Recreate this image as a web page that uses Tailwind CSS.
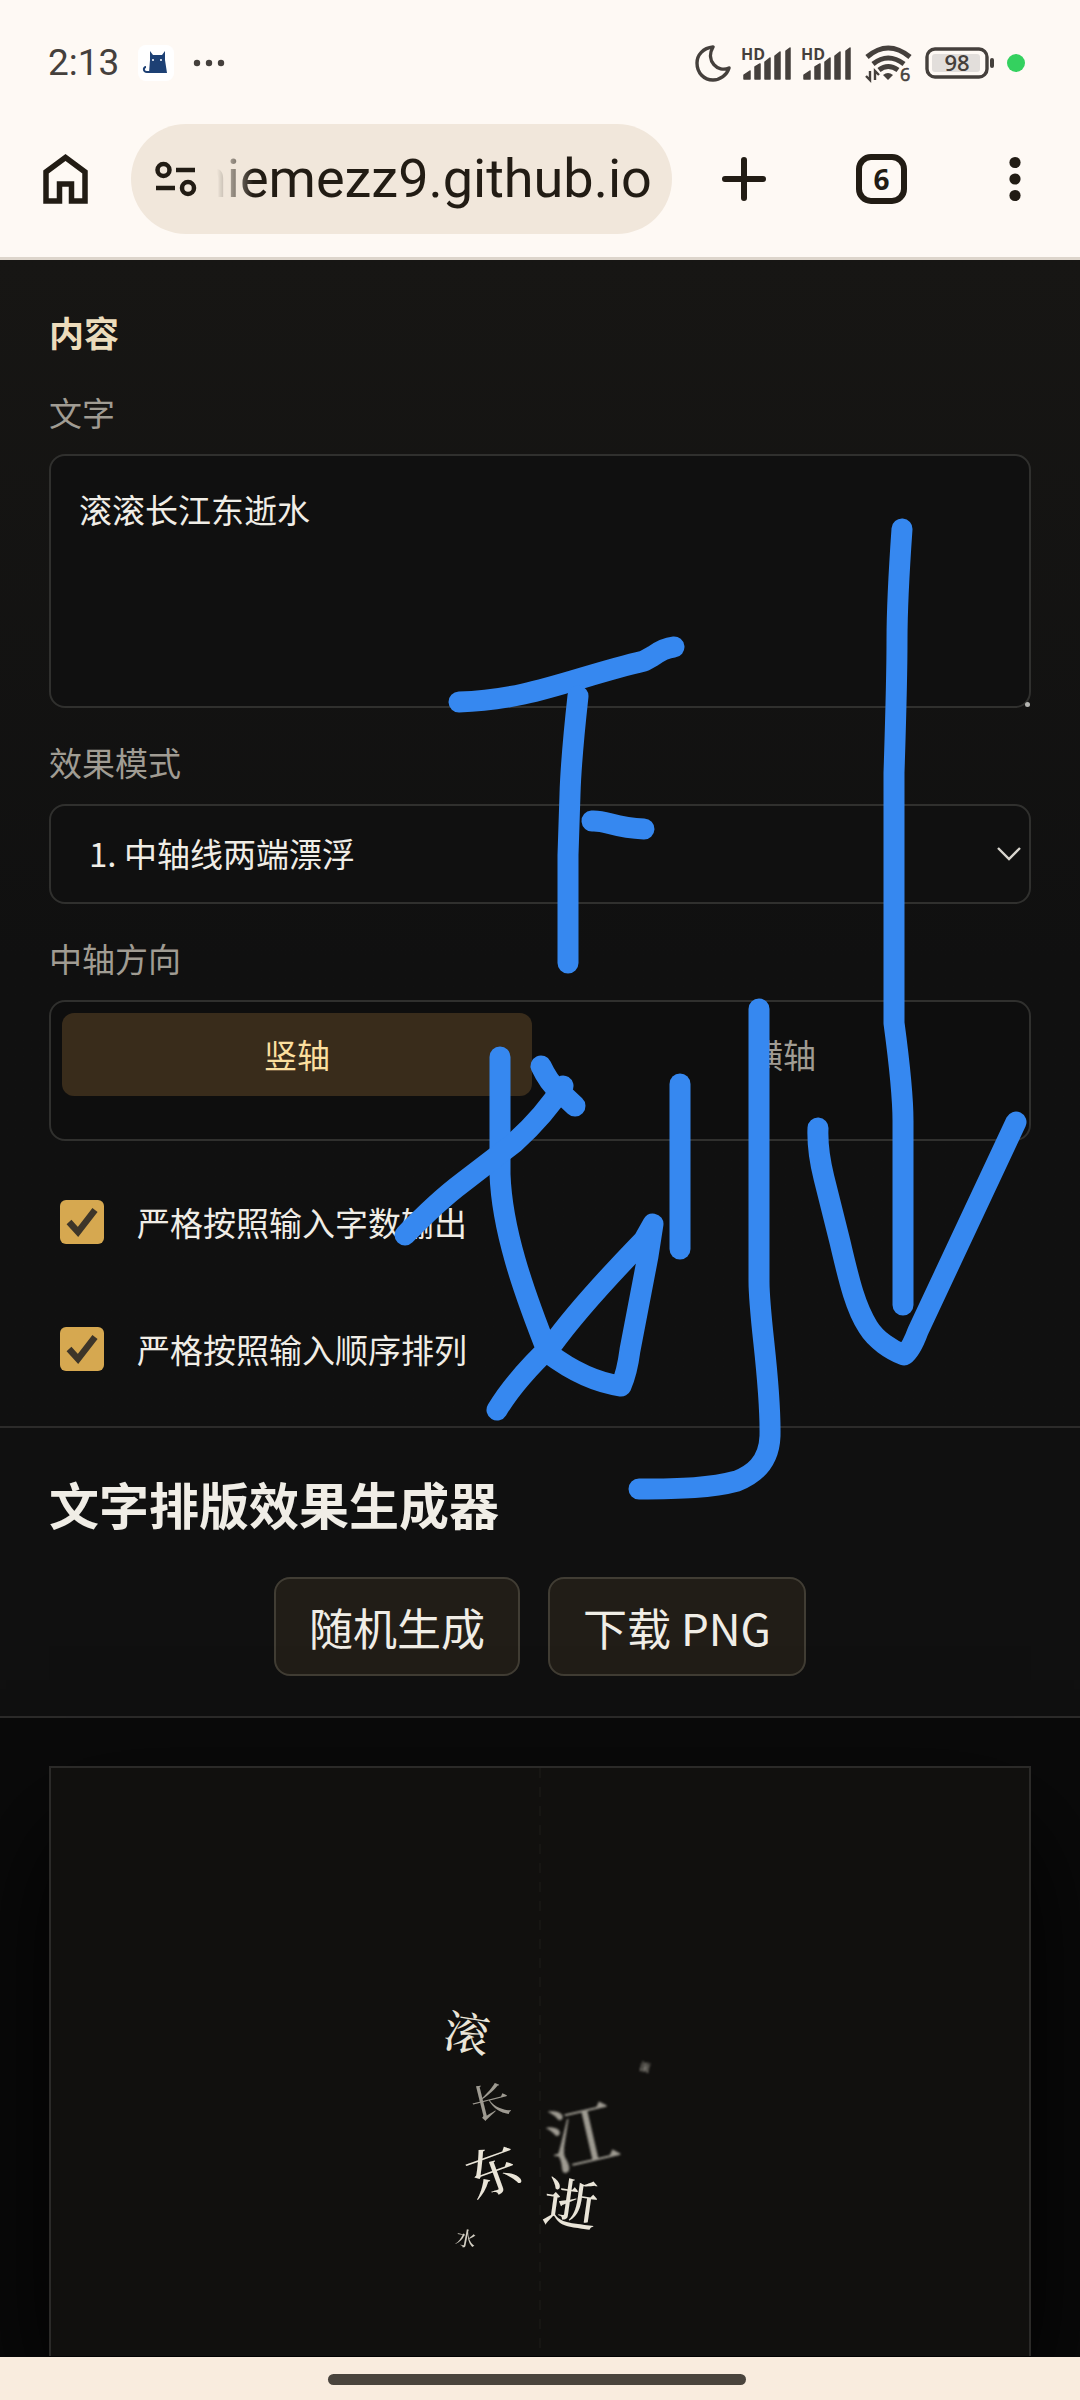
<!DOCTYPE html>
<html lang="zh-CN">
<head>
  <meta charset="UTF-8" />
  <meta name="viewport" content="width=device-width, initial-scale=1.0"/>
  <title>文字排版效果生成器</title>

  <!-- Tailwind CSS -->
  <script src="https://cdn.jsdelivr.net/npm/@tailwindcss/browser@4"></script>
</head>

<body class="relative min-h-screen flex flex-col bg-[#0a0a0a] text-[#f0ede6] font-['Noto_Sans_CJK_SC',sans-serif]">

  <!-- Status bar -->
  <header class="bg-[#fef9f4] border-b-3 border-[#ddd5cb]">
    <div class="h-31 px-12 pt-0.5 flex items-center justify-between text-[#45403c]">
      <div class="flex items-center">
        <span class="w-[90px] text-[37px] leading-10 font-[Roboto,sans-serif]">2:13</span>
        <svg class="w-9 h-9" viewBox="0 0 36 36">
          <rect width="36" height="36" rx="8" fill="#fff"/>
          <path d="M12 6l3 4h9l3-4v9l2 13H11l1-13z" fill="#1d4074"/>
          <path d="M12 27H9c-4 0-4-5-1-5" fill="none" stroke="#1d4074" stroke-width="2"/>
          <circle cx="15" cy="15" r="1" fill="#fff"/><circle cx="23" cy="15" r="1" fill="#fff"/>
        </svg>
        <svg class="w-8 h-2 ml-[19px]" viewBox="0 0 32 8" fill="#45403c">
          <circle cx="4" cy="4" r="3.2"/><circle cx="16" cy="4" r="3.2"/><circle cx="28" cy="4" r="3.2"/>
        </svg>
      </div>
      <div class="flex items-center">
        <svg class="w-9 h-10" viewBox="0 0 36 40" fill="none" stroke="#45403c" stroke-width="3.4" stroke-linejoin="round">
          <path d="M18 4C8 5 2 12 2 20c0 10 7 17 16 17 7 0 14-5 16-12-11 5-24-7-16-21z"/>
        </svg>
        <svg class="w-[52px] h-10 ml-2.5" viewBox="0 0 52 40" fill="#45403c">
          <text x="0" y="17" font-size="16" font-weight="700" font-family="Open Sans, sans-serif">HD</text>
          <path d="M3 36v-4l6-4v8zM14 36V24l5-3v15zM24 36V19l5-4v21zM34 36V13l5-4v27zM45 36V8l4-3v31z" stroke="#45403c" stroke-width="1.500" stroke-linejoin="round"/>
        </svg>
        <svg class="w-[52px] h-10 ml-2" viewBox="0 0 52 40" fill="#45403c">
          <text x="0" y="17" font-size="16" font-weight="700" font-family="Open Sans, sans-serif">HD</text>
          <path d="M3 36v-4l6-4v8zM14 36V24l5-3v15zM24 36V19l5-4v21zM34 36V13l5-4v27zM45 36V8l4-3v31z" stroke="#45403c" stroke-width="1.500" stroke-linejoin="round"/>
        </svg>
        <svg class="w-12 h-11 ml-3" viewBox="0 0 48 44" fill="none" stroke="#45403c" stroke-width="5">
          <path d="M2 16Q23-2 45 16M8 23q15-12 31 0M14 29q9-7 19 0"/>
          <path d="M18 34q5-4 10 0l-5 5z" fill="#45403c" stroke="none"/>
          <path d="M5 30v9l-4-4M10 39v-9l4 4" stroke-width="2.4"/>
          <text x="35" y="40" font-size="18" fill="#45403c" stroke="#45403c" stroke-width=".6" font-family="Open Sans, sans-serif">6</text>
        </svg>
        <svg class="w-[70px] h-9 ml-3" viewBox="0 0 70 36">
          <rect x="2" y="4" width="60" height="28" rx="8" fill="none" stroke="#45403c" stroke-width="3.4"/>
          <rect x="7" y="9" width="48" height="18" rx="3" fill="#e2dedb"/>
          <rect x="65" y="13" width="4" height="10" rx="2" fill="#45403c"/>
          <text x="32" y="26" text-anchor="middle" font-size="22" font-weight="600" fill="#45403c" font-family="Open Sans, sans-serif">98</text>
        </svg>
        <span class="w-[18px] h-[18px] ml-3 mr-[7px] rounded-full bg-[#34d15f]"></span>
      </div>
    </div>

    <!-- Browser toolbar -->
    <div class="px-10 pb-[23px] flex items-center justify-between text-[#221c14]">
      <button aria-label="主页">
        <svg class="w-[50px] h-14" viewBox="0 0 50 56" fill="none" stroke="#221c14" stroke-width="5.500">
          <path d="M6 50V21L25.500 6.500 45 21v29H31.500V33h-12v17z"/>
        </svg>
      </button>
      <div class="flex-1 min-w-0 h-[110px] ml-[41px] mr-12 pl-6 pr-5 rounded-full bg-[#f1e7db] flex items-center">
        <svg class="w-[42px] h-10 shrink-0" viewBox="0 0 42 40" fill="none" stroke="#221c14" stroke-width="4.500">
          <circle cx="8.500" cy="11" r="6"/><path d="M21 11h19M1 29h19"/><circle cx="33" cy="29" r="6"/>
        </svg>
        <input type="text" aria-label="网址" value="niemezz9.github.io" class="flex-1 min-w-0 h-20 ml-5 text-[54px] -indent-5 leading-[80px] font-[Roboto,sans-serif] outline-none [mask-image:linear-gradient(to_right,transparent,#000_36px)]"/>
      </div>
      <button aria-label="新标签页">
        <svg class="w-12 h-12" viewBox="0 0 48 48" stroke="#221c14" stroke-width="6" stroke-linecap="round">
          <path d="M24 5v38M5 24h38"/>
        </svg>
      </button>
      <button class="w-[51px] h-[50px] ml-[88px] mr-[83px] border-[6px] border-[#221c14] rounded-[15px] text-[28px] leading-9 font-bold font-['Open_Sans',sans-serif]">6</button>
      <button aria-label="菜单">
        <svg class="w-[50px] h-12" viewBox="0 0 50 48" fill="#221c14">
          <circle cx="25" cy="7.500" r="5.600"/><circle cx="25" cy="24" r="5.600"/><circle cx="25" cy="40.500" r="5.600"/>
        </svg>
      </button>
    </div>
  </header>

  <main class="flex-1 flex flex-col">
    <!-- Controls -->
    <section class="px-[49px] pt-12 pb-[55px] bg-linear-to-b from-[#171614] to-[#101010] to-60% border-b-2 border-[#2c2b2a]">
      <h2 class="text-[35px] leading-12 font-bold text-[#ecdcbc]">内容</h2>

      <label for="content" class="block mt-9 text-[33px] leading-10 text-[#a09c93]">文字</label>
      <div class="relative mt-[22px]">
        <textarea id="content" class="block w-full h-[254px] px-7 py-[29px] resize-none text-[33px] leading-12 bg-[#101010] border-2 border-[#30302e] rounded-2xl outline-none">滚滚长江东逝水</textarea>
        <span class="absolute right-[1px] bottom-[1px] w-[5px] h-[5px] rounded-full bg-[#b5b5b2]"></span>
      </div>

      <label for="mode" class="block mt-[34px] text-[33px] leading-10 text-[#a09c93]">效果模式</label>
      <div class="relative mt-[22px]">
        <select id="mode" class="block w-full h-[100px] px-[38px] appearance-none text-[33px] bg-[#101010] border-2 border-[#30302e] rounded-2xl outline-none">
          <option>1. 中轴线两端漂浮</option>
        </select>
        <svg class="absolute right-2.5 top-[42px] w-6 h-4" viewBox="0 0 24 16" fill="none" stroke="#d8d5ce" stroke-width="2.400">
          <path d="M1 2l11 11L23 2"/>
        </svg>
      </div>

      <p id="axisLabel" class="mt-[34px] text-[33px] leading-10 text-[#a09c93]">中轴方向</p>
      <div role="group" aria-labelledby="axisLabel" class="mt-[22px] h-[141px] p-[11px] grid grid-cols-2 gap-4 items-start bg-[#0e0e0e] border-2 border-[#30302e] rounded-2xl">
        <button class="h-[83px] rounded-xl text-[33px] bg-[#392c1b] text-[#fbdf9f]">竖轴</button>
        <button class="h-[83px] rounded-xl text-[33px] text-[#a09c93]">横轴</button>
      </div>

      <div class="pt-[59px] pl-[11px] flex flex-col gap-[83px]">
        <div class="h-11 flex items-center gap-[33px]">
          <span class="grid *:col-start-1 *:row-start-1">
            <input id="strictCount" type="checkbox" checked class="w-11 h-11 appearance-none rounded-md bg-[#d6a850]"/>
            <svg class="w-11 h-11 pointer-events-none" viewBox="0 0 44 44" fill="none" stroke="#3d3529" stroke-width="6.500">
              <path d="M9 22l9 10L35 10"/>
            </svg>
          </span>
          <label for="strictCount" class="text-[33px] leading-10">严格按照输入字数输出</label>
        </div>
        <div class="h-11 flex items-center gap-[33px]">
          <span class="grid *:col-start-1 *:row-start-1">
            <input id="strictOrder" type="checkbox" checked class="w-11 h-11 appearance-none rounded-md bg-[#d6a850]"/>
            <svg class="w-11 h-11 pointer-events-none" viewBox="0 0 44 44" fill="none" stroke="#3d3529" stroke-width="6.500">
              <path d="M9 22l9 10L35 10"/>
            </svg>
          </span>
          <label for="strictOrder" class="text-[33px] leading-10">严格按照输入顺序排列</label>
        </div>
      </div>
    </section>

    <!-- Title and actions -->
    <section class="px-[49px] pt-[45px] pb-10 bg-[#101010] border-b-2 border-[#2c2b2a]">
      <h1 class="text-[50px] leading-[60px] font-bold">文字排版效果生成器</h1>
      <div class="mt-11 flex justify-center gap-7">
        <button class="h-[99px] px-[33px] text-[44px] bg-[#211d17] border-2 border-[#413d34] rounded-2xl">随机生成</button>
        <button class="h-[99px] px-[33px] text-[44px] bg-[#211d17] border-2 border-[#413d34] rounded-2xl">下载 PNG</button>
      </div>
    </section>

    <!-- Canvas preview -->
    <section class="flex-1 px-[49px] pt-12">
      <div class="h-full bg-[#11100e] border-2 border-b-0 border-[#2b2a28] shadow-[0_60px_120px_#000]">
        <svg class="block w-full" viewBox="51 1769 978 588" fill="#eae5d8" text-anchor="middle" font-family="'Noto Serif CJK SC','Noto Serif SC','Noto Sans CJK SC',serif">
          <path d="M540 1769v588" stroke="#171613" stroke-width="2" stroke-dasharray="10 9"/>
          <text transform="translate(467 2034) rotate(9)" y="17" font-size="45" font-weight="500">滚</text>
          <text transform="translate(490 2102) rotate(-14)" y="15" font-size="39" font-weight="500" opacity=".65">长</text>
          <text transform="translate(493 2172) rotate(-20)" y="20" font-size="53" font-weight="500">东</text>
          <text transform="translate(466 2239) rotate(11)" y="8" font-size="20" font-weight="500" opacity=".9">水</text>
          <text transform="translate(582 2138) rotate(-13)" y="26" font-size="70" font-weight="500" opacity=".65" class="blur-[1px]">江</text>
          <text transform="translate(571 2205) rotate(8)" y="20" font-size="54" font-weight="500">逝</text>
          <text transform="translate(645 2068) rotate(15)" y="4" font-size="10" font-weight="700" opacity=".7" class="blur-[1px]">滚</text>
        </svg>
      </div>
    </section>
  </main>

  <!-- Gesture bar -->
  <footer class="h-[43px] pt-[17px] pr-1.5 bg-[#f9ecde] flex justify-center">
    <div class="w-[418px] h-[11px] rounded-full bg-[#4a443d]"></div>
  </footer>

  <!-- Hand-drawn marks over the page -->
  <svg class="absolute inset-0 w-full pointer-events-none" viewBox="0 0 1080 2400" fill="none" stroke="#3688f0" stroke-width="21" stroke-linecap="round" stroke-linejoin="round">
    <path d="M459 702C530 700 575 677 644 661L653 656Q664 648 674 647"/>
    <path d="M578 696Q571 760 570 794T568 855V963"/>
    <path d="M592 821C606 820 614 828 644 829"/>
    <path d="M902 529Q897 600 897 640T894 773V1023Q903 1090 903 1121V1305"/>
    <path d="M818 1128Q817 1150 824 1178L840 1242C850 1285 856 1308 868 1327 876 1340 891 1350 904 1355Q911 1350 918 1331L1016 1122"/>
    <path d="M500 1057V1174C502 1230 523 1290 548 1353Q585 1381 621 1386 627 1373 630 1350L648 1256 653 1224 644 1240Q580 1306 552 1345 515 1380 497 1410"/>
    <path d="M405 1235Q438 1201 462 1183L514 1143Q545 1115 563 1086"/>
    <path d="M541 1066Q549 1083 558 1090L575 1106"/>
    <path d="M680 1084V1249"/>
    <path d="M759 1009V1281C759 1320 771 1380 770 1436 769 1464 752 1475 737 1481 711 1488 682 1489 639 1489"/>
  </svg>
</body>
</html>
